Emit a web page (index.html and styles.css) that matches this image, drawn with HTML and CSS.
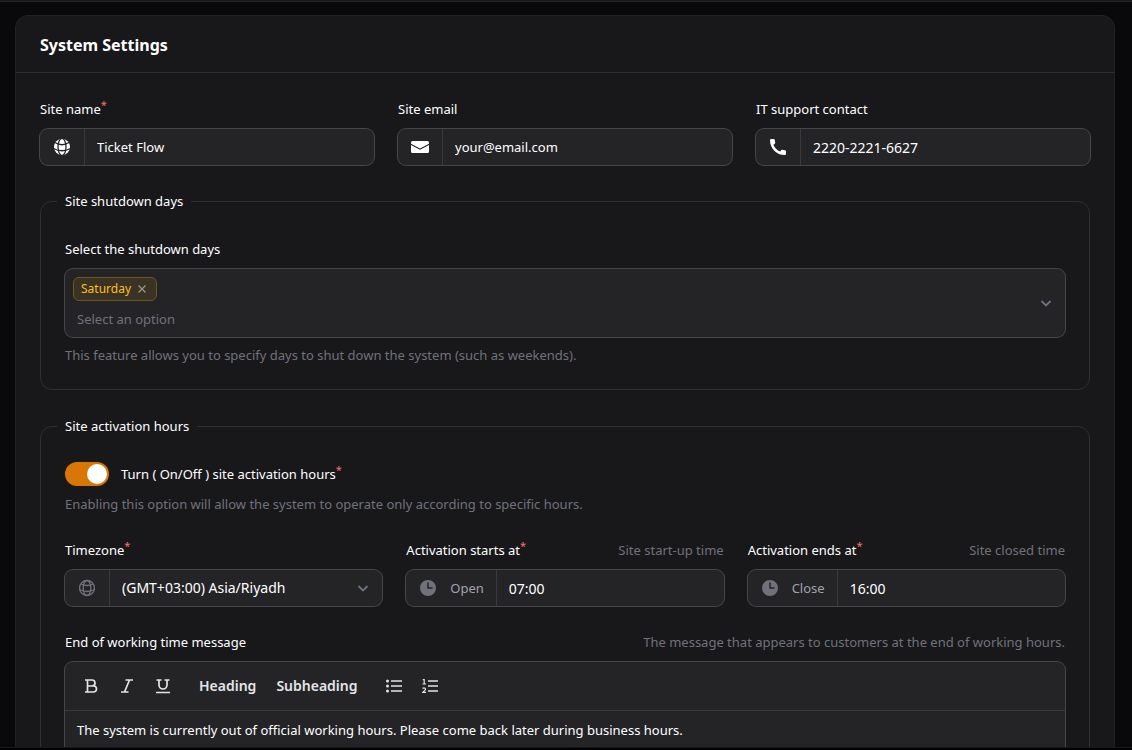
FILE: index.html
```html
<!DOCTYPE html>
<html lang="en">
<head>
  <meta charset="UTF-8">
  <meta name="viewport" content="width=device-width, initial-scale=1.0">
  <title>System Settings</title>
  <link rel="stylesheet" href="styles.css">
</head>
<body>
  <div class="topbar"></div>

  <main class="page">
    <form class="card">
      <header class="card-header">
        <h1>System Settings</h1>
      </header>

      <div class="card-body">
        <!-- General -->
        <div class="grid">
          <div class="field">
            <div class="label-row">
              <label for="siteName">Site name<sup>*</sup></label>
            </div>
            <div class="control">
              <span class="prefix light">
                <svg class="icon" viewBox="0 0 20 20" fill="none" stroke="#242427" stroke-width="1.3"><circle cx="10" cy="10" r="8" fill="#fff" stroke="none"/><ellipse cx="10" cy="10" rx="4" ry="8.6"/><path d="M3 5.500Q10 10 17 5.500M1.500 11.500Q10 16 18.500 11.500"/></svg>
              </span>
              <input type="text" id="siteName" value="Ticket Flow">
            </div>
          </div>

          <div class="field">
            <div class="label-row">
              <label for="siteEmail">Site email</label>
            </div>
            <div class="control">
              <span class="prefix light">
                <svg class="icon" viewBox="0 0 20 20" fill="currentColor"><path d="M1 5.5A1.5 1.5 0 0 1 2.500 4h15A1.5 1.5 0 0 1 19 5.500v1.200l-9 4.800-9-4.800zM1 8l9 4.800L19 8v6.500a1.500 1.500 0 0 1-1.500 1.500h-15A1.500 1.500 0 0 1 1 14.500z"/></svg>
              </span>
              <input type="email" id="siteEmail" value="your@email.com">
            </div>
          </div>

          <div class="field">
            <div class="label-row">
              <label for="contact">IT support contact</label>
            </div>
            <div class="control">
              <span class="prefix light">
                <svg class="icon" viewBox="0 0 20 20" fill="currentColor"><path d="M3.200 2h2.300q1.100 0 1.300 1l.4 2.700q.1 1-.7 1.400l-1.100.6q1.800 4.700 6.900 6.900l.6-1.100q.5-.9 1.400-.7l2.700.4q1 .2 1 1.300v2.300q0 1.200-1.200 1.200C8.500 18 2 11.500 2 3.200Q2 2 3.200 2z"/></svg>
              </span>
              <input type="tel" class="numeric" id="contact" value="2220-2221-6627">
            </div>
          </div>
        </div>

        <!-- Shutdown days -->
        <fieldset class="group">
          <legend>Site shutdown days</legend>
          <div class="field">
            <div class="label-row">
              <label for="days">Select the shutdown days</label>
            </div>
            <div class="control multi">
              <div class="multi-main">
                <div class="chips">
                  <span class="chip">Saturday
                    <button type="button" aria-label="Remove Saturday">
                      <svg viewBox="0 0 8 8" fill="none" stroke="currentColor" stroke-width="1.300"><path d="M0.500 0.500l7 7M7.500 0.500l-7 7"/></svg>
                    </button>
                  </span>
                </div>
                <input type="text" id="days" placeholder="Select an option">
              </div>
              <svg class="chevron" viewBox="0 0 12 12" fill="none" stroke="currentColor" stroke-width="1.800"><path d="M1.500 4l4.500 4.500L10.500 4"/></svg>
            </div>
            <p class="help">This feature allows you to specify days to shut down the system (such as weekends).</p>
          </div>
        </fieldset>

        <!-- Activation hours -->
        <fieldset class="group">
          <legend>Site activation hours</legend>
          <div class="field">
            <div class="switch-row">
              <input type="checkbox" class="switch" id="activation" checked>
              <label for="activation">Turn ( On/Off ) site activation hours<sup>*</sup></label>
            </div>
            <p class="help">Enabling this option will allow the system to operate only according to specific hours.</p>
          </div>

          <div class="grid">
            <div class="field">
              <div class="label-row">
                <label for="timezone">Timezone<sup>*</sup></label>
              </div>
              <div class="control">
                <span class="prefix">
                  <svg class="icon" viewBox="0 0 20 20" fill="none" stroke="currentColor" stroke-width="1.300"><circle cx="10" cy="10" r="7.500"/><ellipse cx="10" cy="10" rx="3.800" ry="7.500"/><path d="M3.800 6Q10 9 16.200 6M2.500 11.500Q10 15.500 17.500 11.500"/></svg>
                </span>
                <select class="numeric" id="timezone">
                  <option>(GMT+03:00) Asia/Riyadh</option>
                </select>
                <svg class="chevron" viewBox="0 0 12 12" fill="none" stroke="currentColor" stroke-width="1.800"><path d="M1.500 4l4.500 4.500L10.500 4"/></svg>
              </div>
            </div>

            <div class="field">
              <div class="label-row">
                <label for="startsAt">Activation starts at<sup>*</sup></label>
                <span class="hint">Site start-up time</span>
              </div>
              <div class="control">
                <span class="prefix">
                  <svg class="icon" viewBox="0 0 20 20" fill="currentColor"><path fill-rule="evenodd" d="M10 18a8 8 0 1 0 0-16 8 8 0 0 0 0 16Zm.75-13a.75.75 0 0 0-1.500 0v5c0 .414.336.75.75.75h4a.75.75 0 0 0 0-1.500h-3.250V5Z"/></svg>
                  <span>Open</span>
                </span>
                <input type="text" class="numeric" id="startsAt" value="07:00">
              </div>
            </div>

            <div class="field">
              <div class="label-row">
                <label for="endsAt">Activation ends at<sup>*</sup></label>
                <span class="hint">Site closed time</span>
              </div>
              <div class="control">
                <span class="prefix">
                  <svg class="icon" viewBox="0 0 20 20" fill="currentColor"><path fill-rule="evenodd" d="M10 18a8 8 0 1 0 0-16 8 8 0 0 0 0 16Zm.75-13a.75.75 0 0 0-1.500 0v5c0 .414.336.75.75.75h4a.75.75 0 0 0 0-1.500h-3.250V5Z"/></svg>
                  <span>Close</span>
                </span>
                <input type="text" class="numeric" id="endsAt" value="16:00">
              </div>
            </div>
          </div>

          <div class="field">
            <div class="label-row">
              <label for="message">End of working time message</label>
              <span class="hint">The message that appears to customers at the end of working hours.</span>
            </div>
            <div class="editor">
              <div class="toolbar">
                <div class="tools">
                  <button type="button" class="tool" aria-label="Bold">
                    <svg viewBox="0 0 16 16"><path d="M2 2h7a3 3 0 0 1 0 6H5M9 8h1.500a3 3 0 0 1 0 6H2M4.500 2v12"/></svg>
                  </button>
                  <button type="button" class="tool" aria-label="Italic">
                    <svg viewBox="0 0 16 16"><path d="M6.500 2H14M2 14h7.500M10.500 2l-5 12"/></svg>
                  </button>
                  <button type="button" class="tool" aria-label="Underline">
                    <svg viewBox="0 0 16 16"><path d="M1.500 2h5M9.500 2h5M4 2v5a4 4 0 0 0 8 0V2M1 14.500h14"/></svg>
                  </button>
                </div>
                <div class="tools">
                  <button type="button" class="tool text">Heading</button>
                  <button type="button" class="tool text">Subheading</button>
                </div>
                <div class="tools">
                  <button type="button" class="tool" aria-label="Bullet list">
                    <svg viewBox="0 0 16 16"><path d="M5 3h11M5 8h11M5 13h11"/><path class="dots" d="M1.500 3h0M1.500 8h0M1.500 13h0"/></svg>
                  </button>
                  <button type="button" class="tool" aria-label="Numbered list">
                    <svg viewBox="0 0 16 16"><path d="M6 3h10M6 8h10M6 13h10"/><path class="thin" d="M.8 1.700h1.400V6M.5 6h3.500M.6 10.500q1.200-1 2.400-.3 1 1-.2 2.200L.8 14.300H4"/></svg>
                  </button>
                </div>
              </div>
              <textarea id="message" rows="4">The system is currently out of official working hours. Please come back later during business hours.</textarea>
            </div>
          </div>
        </fieldset>
      </div>
    </form>
  </main>

  <div class="bottombar"></div>
</body>
</html>
```
FILE: styles.css
```css
* {
  box-sizing: border-box;
}

body {
  display: flex;
  flex-direction: column;
  height: 100vh;
  margin: 0;
  overflow: hidden;
  background-color: #09090b;
  color: #fff;
  font-family: "Noto Sans", sans-serif;
  font-size: 13px;
  line-height: 24px;
}

input,
select,
textarea,
button {
  margin: 0;
  padding: 0;
  border: none;
  outline: none;
  background: none;
  color: inherit;
  font: inherit;
}

.topbar {
  flex: none;
  height: 2px;
  background-color: #18181b;
  border-bottom: 1px solid #222224;
}

.bottombar {
  flex: none;
  height: 3px;
  background-color: #000;
  border-top: 1px solid #18181b;
}

.page {
  flex: 1;
  min-height: 0;
  overflow: hidden;
  padding: 13px 17px 0 15px;
}

.card {
  border: 1px solid #222224;
  border-radius: 13px;
  background-color: #18181b;
}

.card-header {
  padding: 17px 24px 15px;
  border-bottom: 1px solid #2f2f32;
}

.card-header h1 {
  margin: 0;
  font-size: 16px;
  line-height: 24px;
  font-weight: 700;
}

.card-body {
  display: flex;
  flex-direction: column;
  gap: 24px;
  padding: 24px;
}

.grid {
  display: grid;
  grid-template-columns: repeat(3, minmax(0, 1fr));
  gap: 24px;
}

.field {
  display: flex;
  flex-direction: column;
  gap: 8px;
}

.label-row {
  display: flex;
  justify-content: space-between;
}

sup {
  color: #f87171;
  font-size: 11px;
  line-height: 0;
}

.hint,
.help {
  color: #71717a;
}

.help {
  margin: 0;
  line-height: 20px;
}

.control {
  display: flex;
  align-items: center;
  min-height: 36px;
  border-radius: 8px;
  background-color: #242427;
  box-shadow: 0 0 0 1px #464649;
}

.control input,
.control select {
  flex: 1;
  min-width: 0;
  height: 36px;
  padding: 0 12px;
}

.control select {
  appearance: none;
}

.control .numeric {
  font-size: 14px;
}

.prefix {
  display: flex;
  align-items: center;
  gap: 12px;
  height: 36px;
  padding: 0 12px;
  border-right: 1px solid #3a3a3d;
  color: #71717a;
}

.prefix span {
  color: #a1a1aa;
}

.prefix.light {
  color: #fff;
}

.icon {
  width: 20px;
  height: 20px;
}

.chevron {
  flex: none;
  width: 12px;
  height: 12px;
  margin-right: 13px;
  color: #6b7280;
}

.group {
  display: flex;
  flex-direction: column;
  gap: 24px;
  min-width: 0;
  margin: 0;
  padding: 24px;
  border: 1px solid #2f2f32;
  border-radius: 12px;
}

.group legend {
  margin-left: -8px;
  padding: 0 8px;
}

.multi-main {
  flex: 1;
  padding: 8px 0;
}

.control.multi input {
  display: block;
  width: 100%;
  height: 20px;
  margin-top: 8px;
}

.multi-main input::placeholder {
  color: #71717a;
  opacity: 1;
}

.chips {
  display: flex;
  padding: 0 8px;
}

.chip {
  display: flex;
  align-items: center;
  gap: 7px;
  height: 24px;
  padding: 0 10px 0 7px;
  border: 1px solid #70561f;
  border-radius: 6px;
  background-color: #3a3223;
  color: #fbbf24;
  font-size: 12px;
}

.chip button {
  display: flex;
  color: #9a9584;
}

.chip svg {
  width: 8px;
  height: 8px;
}

.switch-row {
  display: flex;
  align-items: center;
  gap: 12px;
}

.switch {
  appearance: none;
  display: flex;
  justify-content: flex-end;
  width: 44px;
  height: 24px;
  padding: 2px;
  border-radius: 12px;
  background-color: #d97706;
  cursor: pointer;
}

.switch::before {
  content: "";
  width: 20px;
  height: 20px;
  border-radius: 50%;
  background-color: #fff;
}

.switch:not(:checked) {
  justify-content: flex-start;
  background-color: #3f3f46;
}

.editor {
  border-radius: 8px;
  background-color: #242427;
  box-shadow: 0 0 0 1px #464649;
}

.toolbar {
  display: flex;
  gap: 12px;
  padding: 8px 10px;
  border-bottom: 1px solid #3a3a3d;
}

.tools {
  display: flex;
  gap: 4px;
}

.tool {
  display: flex;
  align-items: center;
  justify-content: center;
  width: 32px;
  height: 32px;
  color: #e4e4e7;
  cursor: pointer;
}

.tool.text {
  width: auto;
  padding: 0 8px;
  font-size: 14px;
  font-weight: 600;
}

.tool svg {
  width: 16px;
  height: 16px;
  fill: none;
  stroke: currentColor;
  stroke-width: 1.7;
}

.tool .thin {
  stroke-width: 1.2;
}

.tool .dots {
  stroke-width: 3;
  stroke-linecap: round;
}

.editor textarea {
  display: block;
  width: 100%;
  padding: 7px 12px;
  resize: none;
}
```
